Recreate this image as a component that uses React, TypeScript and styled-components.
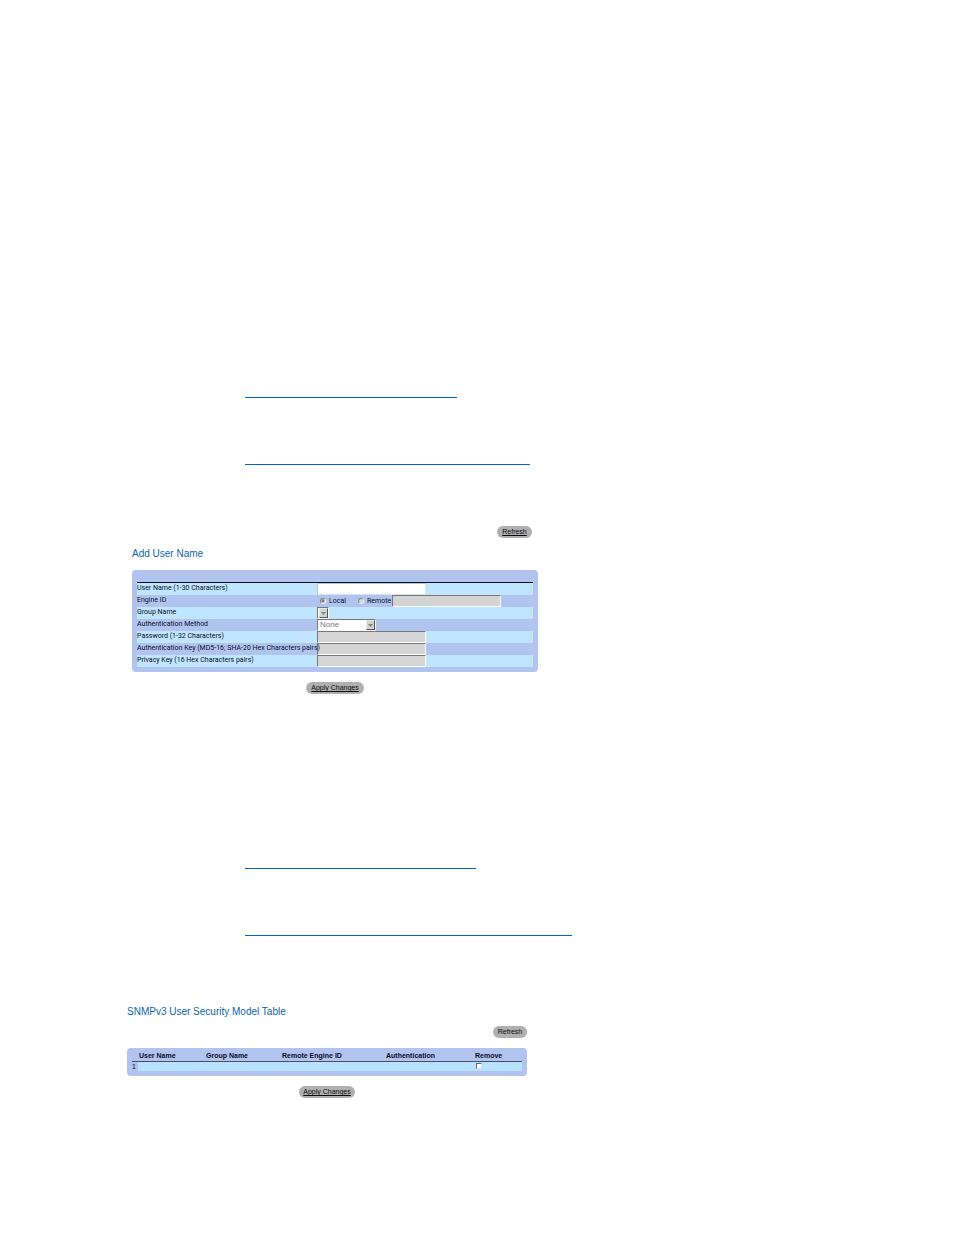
import React from "react";
import styled, { createGlobalStyle, css } from "styled-components";

const sans = `"Liberation Sans", Arial, sans-serif`;
const small = `Roboto, "Liberation Sans", Arial, sans-serif`;

const Global = createGlobalStyle`
  body { margin: 0; background: #fff; color: #0a0f1e; font-family: ${small}; font-size: 7px; }
  *, *::before, *::after { box-sizing: border-box; }
`;

const Page = styled.main`
  padding: 397px 24px 136px 126px;
`;

const Links = styled.nav<{ $top?: number }>`
  display: flex;
  flex-direction: column;
  gap: 66px;
  margin-top: ${(p) => p.$top ?? 0}px;
  padding-left: 119px;
`;

const RuleLink = styled.a<{ $width: number }>`
  display: block;
  width: ${(p) => p.$width}px;
  max-width: 100%;
  height: 1px;
  background: #0066c8;
`;

const Section = styled.section<{ $top: number; $left: number; $width: number }>`
  display: flex;
  flex-direction: column;
  width: 100%;
  max-width: ${(p) => p.$width}px;
  margin-top: ${(p) => p.$top}px;
  margin-left: ${(p) => p.$left}px;
`;

const Title = styled.h2<{ $top?: number; $bottom?: number }>`
  margin: ${(p) => p.$top ?? 0}px 0 ${(p) => p.$bottom ?? 0}px;
  font-family: ${sans};
  font-size: 10px;
  line-height: 16px;
  font-weight: 400;
  color: #0b66a8;
`;

const Actions = styled.div<{ $align: "flex-end" | "center"; $inset?: number }>`
  display: flex;
  justify-content: ${(p) => p.$align};
  padding-right: ${(p) => p.$inset ?? 0}px;
`;

const PillButton = styled.button<{ $plain?: boolean; $width: number }>`
  width: ${(p) => p.$width}px;
  height: 12px;
  padding: 0;
  border: 0;
  border-radius: 6px;
  background: #b0b0b0;
  color: #0a0a0a;
  font: 7px/12px ${sans};
  text-align: center;
  white-space: nowrap;
  text-decoration: ${(p) => (p.$plain ? "none" : "underline")};
`;

const Panel = styled.div<{ $top?: number; $pad: string }>`
  margin: ${(p) => p.$top ?? 10}px 0 10px;
  padding: ${(p) => p.$pad};
  border-radius: 4px;
  background: #b0c4ef;
`;

const FormRows = styled.div`
  border-top: 1px solid #0a0f1e;
`;

const Row = styled.div<{ $light?: boolean }>`
  display: flex;
  height: 12px;
  background: ${(p) => (p.$light ? "#c0e6ff" : "transparent")};
`;

/* The longest label may run a little over the edge of its field. */
const labelText = css`
  position: relative;
  z-index: 1;
  flex: 0 0 180px;
  min-width: 0;
  line-height: 10px;
  white-space: nowrap;
`;

const Label = styled.label`
  ${labelText}
`;

const Caption = styled.span`
  ${labelText}
`;

const TextBox = styled.input`
  width: 109px;
  height: 12px;
  padding: 0 2px;
  border: 1px solid;
  border-color: #777 #fff #fff #777;
  border-radius: 0;
  background: #fff;
  font: 7px/10px ${small};
  &:enabled { border-color: #b4c4d0 #d8e4ea #d8e4ea #b4c4d0; }
  &:disabled { background: #d4d4d4; }
`;

const Choice = styled.label<{ $width: number }>`
  display: flex;
  flex: none;
  align-items: center;
  gap: 3px;
  width: ${(p) => p.$width}px;
  padding-left: 3px;
  line-height: 12px;
`;

const Radio = styled.input`
  appearance: none;
  flex: none;
  width: 6px;
  height: 6px;
  margin: 0;
  border: 1px solid;
  border-color: #848484 #eee #eee #848484;
  border-radius: 50%;
  background: #d4d4d4;
  &:checked { background: radial-gradient(circle, #777 1px, #d4d4d4 2px); }
`;

const SelectFrame = styled.div<{ $width: number }>`
  position: relative;
  width: ${(p) => p.$width}px;
  height: 12px;
`;

const Select = styled.select`
  appearance: none;
  display: block;
  width: 100%;
  height: 12px;
  padding: 0 2px;
  border: 1px solid;
  border-color: #777 #fff #fff #777;
  border-radius: 0;
  background: #fff;
  color: #777;
  opacity: 1;
  font: 8px/10px ${sans};
`;

const Arrow = styled.span`
  position: absolute;
  top: 1px;
  right: 1px;
  display: flex;
  align-items: center;
  justify-content: center;
  width: 9px;
  height: 10px;
  border: 1px solid;
  border-color: #e8e8e8 #555 #555 #e8e8e8;
  background: #d4d4d4;
  pointer-events: none;
`;

const DropDown = ({ id, width, children }: { id: string; width: number; children?: React.ReactNode }) => (
  <SelectFrame $width={width}>
    <Select id={id} disabled>{children}</Select>
    <Arrow>
      <svg width="5" height="3" viewBox="0 0 5 3"><path d="M0 0h5L2.5 3z" fill="#848484" /></svg>
    </Arrow>
  </SelectFrame>
);

const Table = styled.table`
  width: 100%;
  table-layout: fixed;
  border-collapse: collapse;
`;

const HeadCell = styled.th<{ $width?: number }>`
  width: ${(p) => (p.$width ? `${p.$width}px` : "auto")};
  height: 9px;
  padding: 0 0 0 1px;
  border-bottom: 1px solid #4c4c66;
  font-family: ${sans};
  font-size: 7px;
  line-height: 8px;
  font-weight: 700;
  text-align: left;
  white-space: nowrap;
`;

const Cell = styled.td<{ $light?: boolean }>`
  height: 10px;
  padding: 0;
  font-family: ${sans};
  line-height: 9px;
  background: ${(p) => (p.$light ? "#b8e2ff" : "transparent")};
`;

const CheckBox = styled.input`
  appearance: none;
  display: block;
  width: 6px;
  height: 6px;
  margin: 0 0 0 2px;
  border: 1px solid;
  border-color: #666 #ddd #ddd #666;
  background: #fff;
`;

export default function App() {
  return (
    <Page>
      <Global />
      <Links>
        <RuleLink $width={212} href="#add-user" aria-label="Add user name" />
        <RuleLink $width={285} href="#add-user" aria-label="User name settings" />
      </Links>

      <Section id="add-user" $top={61} $left={6} $width={406}>
        <Actions $align="flex-end" $inset={6}>
          <PillButton type="button" $width={35}>Refresh</PillButton>
        </Actions>
        <Title $top={8}>Add User Name</Title>
        <Panel $top={8} $pad="12px 5px 5px">
          <FormRows>
            <Row $light>
              <Label htmlFor="user">User Name (1-30 Characters)</Label>
              <TextBox id="user" />
            </Row>
            <Row>
              <Caption>Engine ID</Caption>
              <Choice $width={38}><Radio type="radio" name="engine" disabled defaultChecked />Local</Choice>
              <Choice $width={37}><Radio type="radio" name="engine" disabled />Remote</Choice>
              <TextBox aria-label="Remote engine ID" disabled />
            </Row>
            <Row $light>
              <Label htmlFor="group">Group Name</Label>
              <DropDown id="group" width={12} />
            </Row>
            <Row>
              <Label htmlFor="method">Authentication Method</Label>
              <DropDown id="method" width={59}><option>None</option></DropDown>
            </Row>
            <Row $light>
              <Label htmlFor="password">Password (1-32 Characters)</Label>
              <TextBox id="password" disabled />
            </Row>
            <Row>
              <Label htmlFor="authkey">Authentication Key (MD5-16; SHA-20 Hex Characters pairs)</Label>
              <TextBox id="authkey" disabled />
            </Row>
            <Row $light>
              <Label htmlFor="privkey">Privacy Key (16 Hex Characters pairs)</Label>
              <TextBox id="privkey" disabled />
            </Row>
          </FormRows>
        </Panel>
        <Actions $align="center">
          <PillButton type="button" $width={58}>Apply Changes</PillButton>
        </Actions>
      </Section>

      <Links $top={174}>
        <RuleLink $width={231} href="#user-table" aria-label="User security model table" />
        <RuleLink $width={327} href="#user-table" aria-label="User security model table settings" />
      </Links>

      <Section id="user-table" $top={68} $left={1} $width={400}>
        <Title $bottom={6}>SNMPv3 User Security Model Table</Title>
        <Actions $align="flex-end">
          <PillButton type="button" $plain $width={34}>Refresh</PillButton>
        </Actions>
        <Panel $pad="4px 5px 5px">
          <Table>
            <thead>
              <tr>
                <HeadCell $width={6} aria-label="Row" />
                <HeadCell $width={67}>User Name</HeadCell>
                <HeadCell $width={76}>Group Name</HeadCell>
                <HeadCell $width={104}>Remote Engine ID</HeadCell>
                <HeadCell $width={89}>Authentication</HeadCell>
                <HeadCell>Remove</HeadCell>
              </tr>
            </thead>
            <tbody>
              <tr>
                <Cell>1</Cell>
                <Cell $light />
                <Cell $light />
                <Cell $light />
                <Cell $light />
                <Cell $light><CheckBox type="checkbox" aria-label="Remove user 1" /></Cell>
              </tr>
            </tbody>
          </Table>
        </Panel>
        <Actions $align="center">
          <PillButton type="button" $width={56}>Apply Changes</PillButton>
        </Actions>
      </Section>
    </Page>
  );
}
